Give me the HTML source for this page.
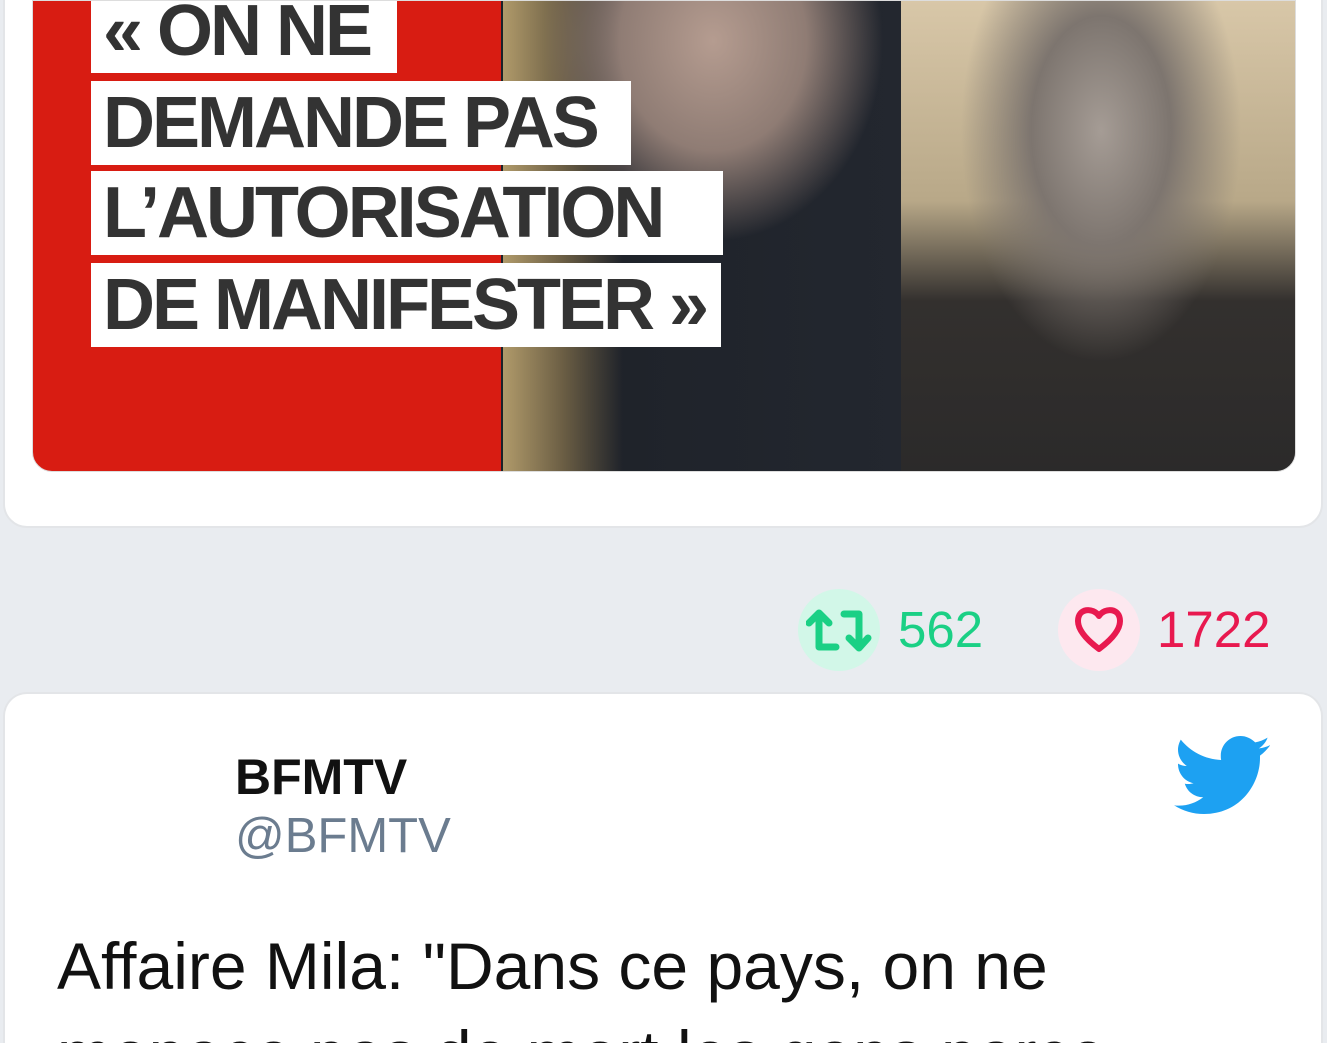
<!DOCTYPE html>
<html><head><meta charset="utf-8"><style>
*{margin:0;padding:0;box-sizing:border-box}
html,body{width:1327px;height:1043px;overflow:hidden}
body{background:#e9ecf0;font-family:"Liberation Sans",sans-serif;position:relative}
.card1{position:absolute;left:3px;top:-30px;width:1320px;height:558px;background:#fff;border-radius:24px;border:2px solid #e3e5e8}
.img{position:absolute;left:32px;top:0;width:1264px;height:472px;border-radius:0 0 20px 20px;overflow:hidden;border:1px solid #ddd;
background:linear-gradient(90deg,#d81c12 0,#d81c12 468px,#1d2128 468px,#23272f 868px,#3a3330 868px)}
.face{position:absolute}
.lab{position:absolute;left:58px;background:#fff;color:#333;font-weight:bold;font-size:72px;line-height:84px;padding-left:12px;white-space:nowrap;letter-spacing:-3px;overflow:hidden}
.c2{position:absolute;left:3px;top:692px;width:1320px;height:351px;background:#fff;border-radius:24px 24px 0 0;border:2px solid #e3e5e8;border-bottom:none;overflow:hidden}
.circ{position:absolute;width:82px;height:82px;border-radius:50%}
.num{position:absolute;top:600px;font-size:51px}
</style></head><body>
<div class="card1"></div>
<div class="img">
 <div class="face" style="left:470px;top:0;width:400px;height:472px;background:radial-gradient(ellipse 170px 200px at 210px 40px,#b59c90 0,#8f7c74 55%,rgba(40,40,45,0) 100%),linear-gradient(90deg,#b09a6a 0,#6b5e44 60px,rgba(0,0,0,0) 120px)"></div>
 <div class="face" style="left:868px;top:0;width:396px;height:472px;background:radial-gradient(ellipse 140px 230px at 200px 130px,#a59c95 0,#7d756f 50%,rgba(0,0,0,0) 100%),linear-gradient(180deg,#d8c7a8 0,#b8a888 200px,#33302e 300px,#2b2a2a 472px)"></div>
 <div class="lab" style="top:-12px;width:306px">« ON NE</div>
 <div class="lab" style="top:80px;width:540px">DEMANDE PAS</div>
 <div class="lab" style="top:170px;width:632px">L’AUTORISATION</div>
 <div class="lab" style="top:262px;width:630px">DE MANIFESTER »</div>
</div>

<div class="circ" style="left:798px;top:589px;background:#d2f7e8"></div>
<svg style="position:absolute;left:806px;top:607px" width="66" height="46" viewBox="0 0 66 46"><g fill="none" stroke="#1bd085" stroke-width="7" stroke-linecap="round" stroke-linejoin="round"><path d="M13 40V7M3 16L13 6L23 16M13 40H30M38 7H53V40M43 31L53 41L62 31"/></g></svg>
<div class="num" style="left:898px;color:#1bd085">562</div>
<div class="circ" style="left:1058px;top:589px;background:#fde8ef"></div>
<svg style="position:absolute;left:1073px;top:605px" width="52" height="50" viewBox="0 0 52 50"><path d="M26 11C20 2 5 3 5 16C5 27 18 38 26 44C34 38 47 27 47 16C47 3 32 2 26 11Z" fill="none" stroke="#e8194f" stroke-width="6" stroke-linejoin="round"/></svg>
<div class="num" style="left:1157px;color:#e8194f">1722</div>

<div class="c2">
<svg style="position:absolute;left:1169px;top:42px" width="96" height="78" viewBox="0 0 24 19.5"><path fill="#1da1f2" d="M24 2.3c-.9.4-1.8.7-2.8.8 1-.6 1.8-1.6 2.2-2.7-1 .6-2 1-3.1 1.2C19.3.6 18 0 16.6 0c-2.7 0-4.9 2.2-4.9 4.9 0 .4 0 .8.1 1.1C7.7 5.8 4.1 3.9 1.7.9c-.4.7-.7 1.6-.7 2.5 0 1.7.9 3.2 2.2 4.1-.8 0-1.6-.2-2.2-.6v.1c0 2.4 1.7 4.4 3.9 4.8-.4.1-.8.2-1.3.2-.3 0-.6 0-.9-.1.6 2 2.4 3.4 4.6 3.4-1.7 1.3-3.8 2.1-6.1 2.1-.4 0-.8 0-1.2-.1 2.2 1.4 4.8 2.2 7.5 2.2 9.1 0 14-7.5 14-14v-.6c1-.7 1.8-1.6 2.5-2.5z"/></svg>
<div style="position:absolute;left:230px;top:54px;font-size:50px;font-weight:bold;color:#111">BFMTV</div>
<div style="position:absolute;left:230px;top:114px;font-size:49px;color:#6b7c8f">@BFMTV</div>
<div style="position:absolute;left:52px;top:228px;font-size:66px;color:#111;line-height:88px;width:1150px">Affaire Mila: "Dans ce pays, on ne menace pas de mort les gens parce</div>
</div>
</body></html>
